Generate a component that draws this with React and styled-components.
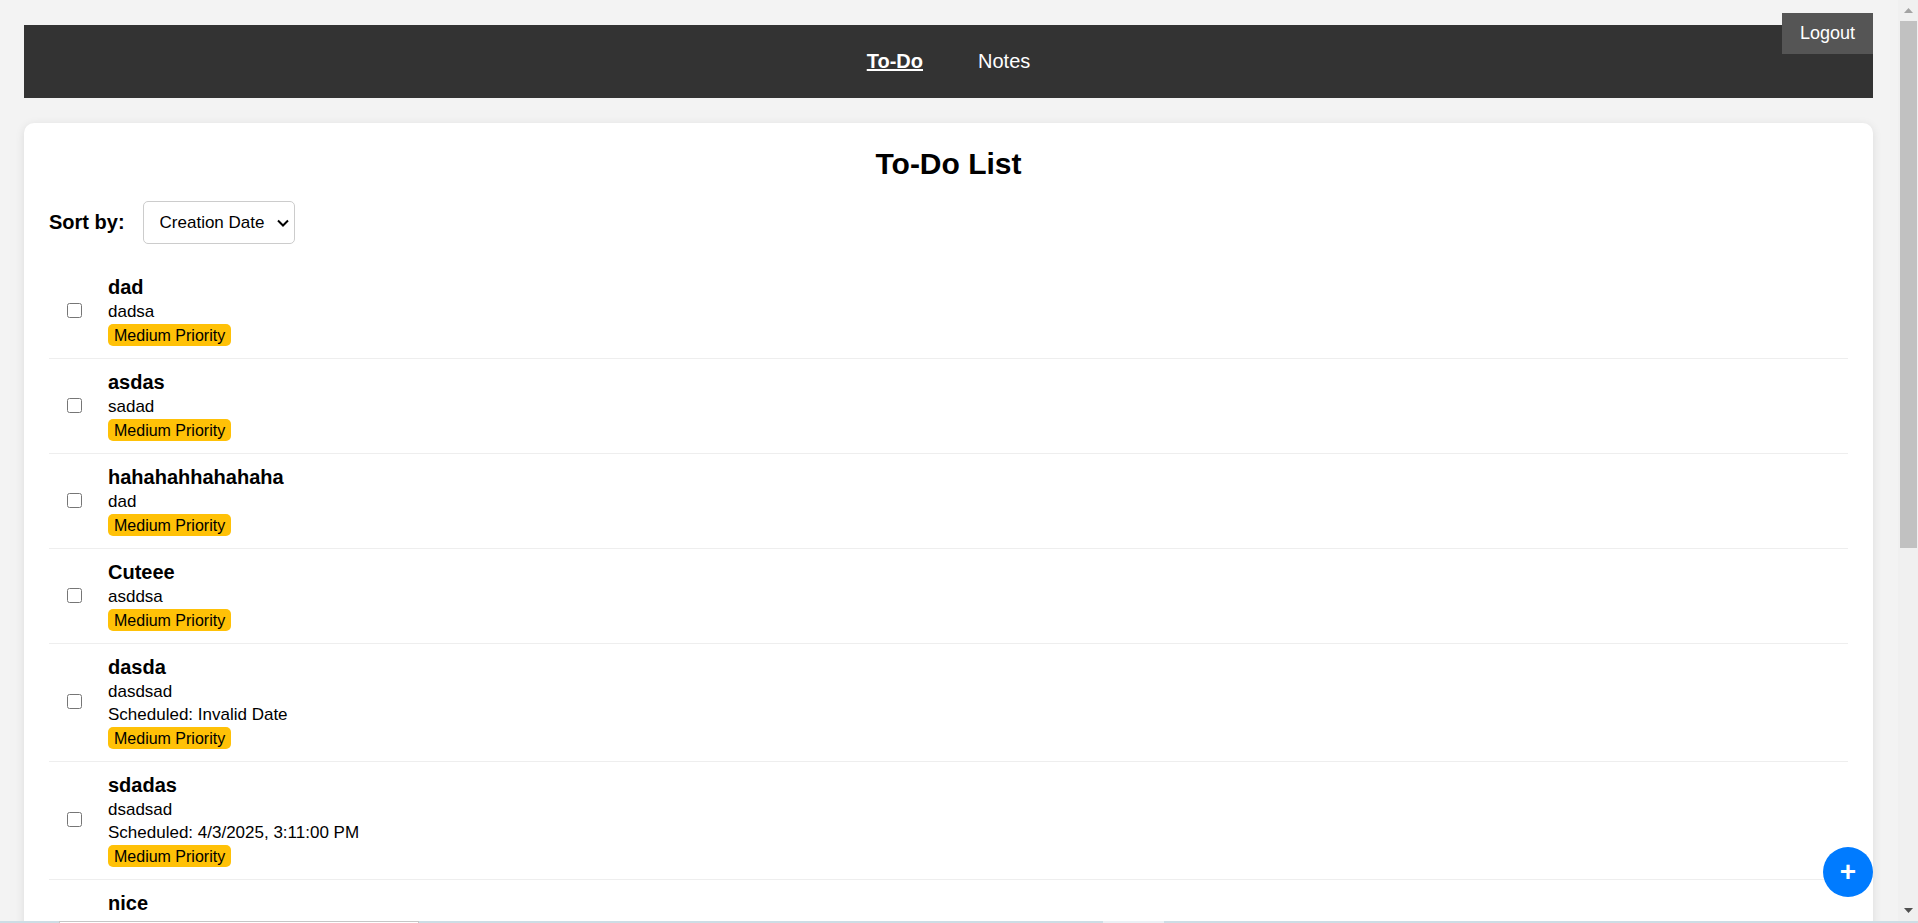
import React, { useState } from "react";
import styled, { createGlobalStyle } from "styled-components";

const GlobalStyle = createGlobalStyle`
  * { box-sizing: border-box; }
  body {
    margin: 0;
    background: #f3f3f3;
    color: #000;
    font-family: "Liberation Sans", Arial, sans-serif;
    font-size: 17px;
  }
`;

const Shell = styled.div`
  display: grid;
  grid-template: minmax(0, 1fr) 2px / minmax(0, 1fr) 20px;
  height: 100vh;
  overflow: hidden;
`;

const Viewport = styled.div`
  position: relative;
  overflow: hidden;
`;

const Page = styled.div`
  display: flex;
  flex-direction: column;
  gap: 25px;
  padding: 25px 25px 25px 24px;
`;

const Header = styled.header`
  display: flex;
  justify-content: center;
  padding: 24px 0 25px;
  background: #333;
`;

const Nav = styled.nav`
  display: flex;
  gap: 55px;
`;

const NavLink = styled.a`
  color: #fff;
  font-size: 20px;
  line-height: 24px;
  font-weight: ${(p) => (p.$active ? "bold" : "normal")};
  text-decoration: ${(p) => (p.$active ? "underline 2px" : "none")};
`;

const LogoutButton = styled.button`
  position: absolute;
  top: 13px;
  right: 25px;
  padding: 10px 18px;
  border: none;
  background: #555;
  color: #fff;
  font-family: inherit;
  font-size: 18px;
  line-height: 21px;
  cursor: pointer;
`;

const Card = styled.main`
  padding: 24px 25px 25px;
  border-radius: 10px;
  background: #fff;
  box-shadow: 0 2px 10px rgba(0, 0, 0, 0.1);
`;

const Title = styled.h1`
  margin: 0 0 20px;
  font-size: 30px;
  line-height: 34px;
  text-align: center;
`;

const SortBar = styled.div`
  display: flex;
  align-items: center;
  gap: 18px;
  margin-bottom: 20px;
`;

const SortLabel = styled.label`
  padding-bottom: 2px;
  font-size: 20px;
  line-height: 24px;
  font-weight: bold;
`;

const SelectBox = styled.div`
  position: relative;
  display: flex;
`;

const SortSelect = styled.select`
  appearance: none;
  height: 43px;
  width: 152px;
  padding: 0 0 0 16px;
  border: 1px solid #ccc;
  border-radius: 5px;
  background-color: #fff;
  color: #000;
  font-family: inherit;
  font-size: 17px;
`;

const Chevron = styled.svg`
  position: absolute;
  right: 6px;
  top: 18px;
  width: 12px;
  height: 8px;
  fill: none;
  stroke: #000;
  stroke-width: 2;
  pointer-events: none;
`;

const List = styled.ul`
  margin: 0;
  padding: 0;
  list-style: none;
`;

const Row = styled.li`
  display: flex;
  align-items: center;
  gap: 26px;
  padding: 12px 0 12px 18px;
  border-bottom: 1px solid #eee;
`;

const Check = styled.input`
  width: 15px;
  height: 15px;
  margin: 0 0 2px;
`;

const Details = styled.div`
  display: flex;
  flex-direction: column;
  align-items: flex-start;
`;

const TaskTitle = styled.label`
  margin-bottom: 2px;
  font-size: 20px;
  line-height: 22px;
  font-weight: bold;
`;

const TaskText = styled.span`
  line-height: 23px;
`;

const Badge = styled.span`
  margin-top: 1px;
  padding: 2px 6px 0;
  border-radius: 5px;
  background: #ffc107;
  font-size: 16px;
  line-height: 20px;
`;

const AddButton = styled.button`
  position: absolute;
  right: 25px;
  bottom: 24px;
  width: 50px;
  height: 50px;
  padding: 0;
  border: none;
  border-radius: 50%;
  background: #007bff;
  color: #fff;
  font-family: inherit;
  font-size: 28px;
  font-weight: bold;
  line-height: 50px;
  cursor: pointer;
`;

const Scrollbar = styled.div`
  display: grid;
  grid-template-rows: 21px minmax(0, 1fr) 21px;
  padding: 0 1px 0 2px;
  background: #f0f0f0;
`;

const Track = styled.div`
  min-height: 0;
`;

const Thumb = styled.div`
  height: 60%;
  background: #c1c1c1;
`;

const Arrow = styled.svg`
  align-self: center;
  justify-self: center;
  width: 9px;
  height: 5px;
  fill: ${(p) => (p.$dim ? "#a3a3a3" : "#505050")};
`;

const BottomEdge = styled.div`
  grid-column: 1 / -1;
  display: grid;
  grid-template-columns: 59px 360px 684fr 61px 754fr;
  background: #cddde5;
`;

const EdgeTab = styled.div`
  grid-column: 2;
  border: 1px solid #c6c6c6;
  border-bottom: none;
  background: #fff;
`;

const EdgeItem = styled.div`
  grid-column: 4;
  background: #ebf0f5;
`;

const UpcomingRow = styled(Row)`
  align-items: flex-start;
  min-height: 95px;
  padding-left: 59px;
`;

const tasks = [
  { title: "dad", text: "dadsa" },
  { title: "asdas", text: "sadad" },
  { title: "hahahahhahahaha", text: "dad" },
  { title: "Cuteee", text: "asddsa" },
  { title: "dasda", text: "dasdsad", scheduled: "Invalid Date" },
  { title: "sdadas", text: "dsadsad", scheduled: "4/3/2025, 3:11:00 PM" },
];

function Task({ id, title, text, scheduled }) {
  const [done, setDone] = useState(false);
  return (
    <Row>
      <Check id={id} type="checkbox" checked={done} onChange={() => setDone(!done)} />
      <Details>
        <TaskTitle htmlFor={id}>{title}</TaskTitle>
        <TaskText>{text}</TaskText>
        {scheduled && <TaskText>Scheduled: {scheduled}</TaskText>}
        <Badge>Medium Priority</Badge>
      </Details>
    </Row>
  );
}

export default function App() {
  return (
    <>
      <GlobalStyle />
      <Shell>
        <Viewport>
          <Page>
            <Header>
              <Nav>
                <NavLink href="#todo" $active>To-Do</NavLink>
                <NavLink href="#notes">Notes</NavLink>
              </Nav>
            </Header>
            <Card>
              <Title>To-Do List</Title>
              <SortBar>
                <SortLabel htmlFor="sort">Sort by:</SortLabel>
                <SelectBox>
                  <SortSelect id="sort">
                    <option>Creation Date</option>
                  </SortSelect>
                  <Chevron viewBox="0 0 12 8" aria-hidden="true">
                    <path d="M1 1.500l5 5 5-5" />
                  </Chevron>
                </SelectBox>
              </SortBar>
              <List>
                {tasks.map((t, i) => (
                  <Task key={t.title} id={`task-${i}`} {...t} />
                ))}
                <UpcomingRow>
                  <TaskTitle as="span">nice</TaskTitle>
                </UpcomingRow>
              </List>
            </Card>
          </Page>
          <LogoutButton type="button">Logout</LogoutButton>
          <AddButton type="button" aria-label="Add task">+</AddButton>
        </Viewport>
        <Scrollbar aria-hidden="true">
          <Arrow $dim viewBox="0 0 9 5"><path d="M4.500 0 9 5H0z" /></Arrow>
          <Track><Thumb /></Track>
          <Arrow viewBox="0 0 9 5"><path d="M0 0h9L4.500 5z" /></Arrow>
        </Scrollbar>
        <BottomEdge>
          <EdgeTab />
          <EdgeItem />
        </BottomEdge>
      </Shell>
    </>
  );
}
